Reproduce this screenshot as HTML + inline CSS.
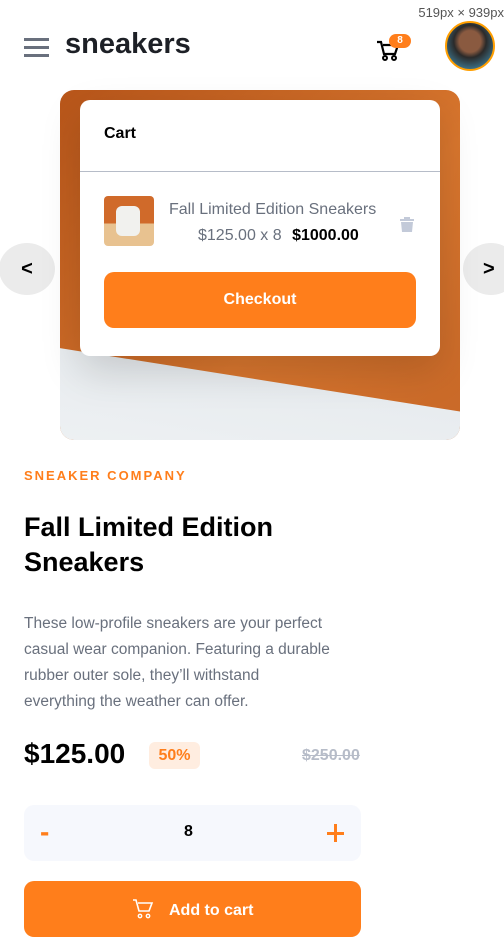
<!DOCTYPE html>
<html><head><meta charset="utf-8"><style>
*{margin:0;padding:0;box-sizing:border-box}
body{width:504px;height:951px;overflow:hidden;background:#fff;font-family:"Liberation Sans",sans-serif;position:relative}
.abs{position:absolute}
</style></head><body>
<div class="abs" style="right:0;top:5px;font-size:13px;color:#555">519px × 939px</div>
<div class="abs" style="left:24px;top:38px;width:25px;height:3px;background:#69707d"></div>
<div class="abs" style="left:24px;top:46px;width:25px;height:3px;background:#69707d"></div>
<div class="abs" style="left:24px;top:54px;width:25px;height:3px;background:#69707d"></div>
<div class="abs" style="left:65px;top:28px;font-size:29px;font-weight:bold;color:#1d2026;letter-spacing:0px">sneakers</div>
<svg class="abs" style="left:376px;top:40px" width="24" height="22" viewBox="0 0 24 22"><path d="M1 2h4l3 12h11l3-9H7" fill="none" stroke="#000" stroke-width="2.2"/><circle cx="9" cy="18" r="2" fill="none" stroke="#000" stroke-width="2"/><circle cx="18" cy="18" r="2" fill="none" stroke="#000" stroke-width="2"/></svg>
<div class="abs" style="left:389px;top:34px;width:22px;height:14px;border-radius:7px;background:#ff7e1b;color:#fff;font-size:10px;font-weight:bold;text-align:center;line-height:14px">8</div>
<div class="abs" style="left:445px;top:21px;width:50px;height:50px;border-radius:50%;border:2px solid #ff9e00;background:radial-gradient(circle at 50% 40%,#8a5a40 0 30%,#2a2a2a 45%,#3a6b80 75%)"></div>
<div class="abs" style="left:60px;top:90px;width:400px;height:350px;border-radius:14px;overflow:hidden;background:linear-gradient(135deg,#b8561a,#d8762e 60%,#c86828)">
<div class="abs" style="left:-20px;top:255px;width:460px;height:200px;background:linear-gradient(#e8ecef,#f3f5f7);transform:rotate(9deg);transform-origin:0 0"></div>
</div>
<div class="abs" style="left:-1px;top:243px;width:56px;height:52px;border-radius:50%;background:#ebebeb;font-size:20px;font-weight:bold;line-height:52px;text-align:center">&lt;</div>
<div class="abs" style="left:463px;top:243px;width:56px;height:52px;border-radius:50%;background:#ebebeb;font-size:20px;font-weight:bold;line-height:52px;padding-left:20px">&gt;</div>
<div class="abs" style="left:80px;top:100px;width:360px;height:256px;background:#fff;border-radius:10px;box-shadow:0 15px 40px rgba(0,0,0,.15)">
<div class="abs" style="left:24px;top:25px;font-size:16px;font-weight:bold;color:#000">Cart</div>
<div class="abs" style="left:0;top:71px;width:360px;height:1px;background:#b6bcc8"></div>
<div class="abs" style="left:24px;top:96px;width:50px;height:50px;border-radius:4px;background:linear-gradient(#d06a2a 0 55%,#e8c290 55%)"><div class="abs" style="left:12px;top:10px;width:24px;height:30px;background:#f1f1ee;border-radius:6px"></div></div>
<div class="abs" style="left:89px;top:101px;font-size:16px;color:#69707d">Fall Limited Edition Sneakers</div>
<div class="abs" style="left:118px;top:127px;font-size:16px;color:#69707d">$125.00 x 8 <b style="color:#000;margin-left:6px">$1000.00</b></div>
<svg class="abs" style="left:320px;top:116px" width="14" height="16" viewBox="0 0 14 16"><path d="M4 1h6v2h4v2H0V3h4z M1 6h12l-1 10H2z" fill="#c3cad9"/></svg>
<div class="abs" style="left:24px;top:172px;width:312px;height:56px;border-radius:10px;background:#ff7e1b;color:#fff;font-weight:bold;font-size:16px;text-align:center;line-height:56px">Checkout</div>
</div>
<div class="abs" style="left:24px;top:468px;font-size:13px;font-weight:bold;color:#ff7e1b;letter-spacing:2px">SNEAKER COMPANY</div>
<div class="abs" style="left:24px;top:510px;font-size:27px;font-weight:bold;color:#000;line-height:35px">Fall Limited Edition<br>Sneakers</div>
<div class="abs" style="left:24px;top:611px;width:335px;font-size:15.5px;color:#69707d;line-height:26px">These low-profile sneakers are your perfect casual wear companion. Featuring a durable rubber outer sole, they’ll withstand<br>everything the weather can offer.</div>
<div class="abs" style="left:24px;top:738px;font-size:28px;font-weight:bold;color:#000">$125.00</div>
<div class="abs" style="left:149px;top:742px;width:51px;height:27px;border-radius:6px;background:#ffede0;color:#ff7e1b;font-weight:bold;font-size:16px;text-align:center;line-height:27px">50%</div>
<div class="abs" style="left:302px;top:747px;font-size:16px;font-weight:bold;color:#b6bcc8;text-decoration:line-through">$250.00</div>
<div class="abs" style="left:24px;top:805px;width:337px;height:56px;border-radius:10px;background:#f6f8fd">
<div class="abs" style="left:16px;top:11px;font-size:28px;font-weight:bold;color:#ff7e1b">-</div>
<div class="abs" style="left:160px;top:18px;font-size:16px;font-weight:bold">8</div>
<div class="abs" style="left:303px;top:17px;width:17px;height:3px;background:#ff7e1b;top:27px"></div>
<div class="abs" style="left:310px;top:19px;width:3px;height:18px;background:#ff7e1b"></div>
</div>
<div class="abs" style="left:24px;top:881px;width:337px;height:56px;border-radius:10px;background:#ff7e1b;color:#fff;font-weight:bold;font-size:16px;line-height:60px;padding-left:145px">Add to cart</div>
<svg class="abs" style="left:132px;top:899px" width="22" height="20" viewBox="0 0 22 20"><path d="M1 1h3l3 11h10l3-8H6" fill="none" stroke="#fff" stroke-width="1.6"/><circle cx="8" cy="17" r="1.7" fill="none" stroke="#fff" stroke-width="1.4"/><circle cx="16" cy="17" r="1.7" fill="none" stroke="#fff" stroke-width="1.4"/></svg>
</body></html>
